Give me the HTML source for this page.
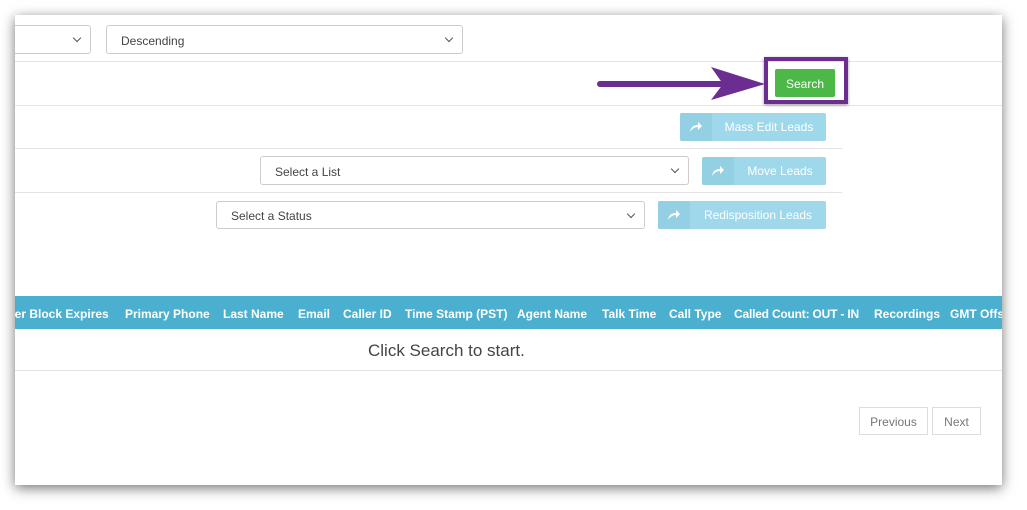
<!DOCTYPE html><html><head><style>
body{margin:0;width:1027px;height:510px;background:#fff;position:relative;overflow:hidden;font-family:"Liberation Sans",sans-serif;}
#pg{position:absolute;left:15px;top:15px;width:987px;height:470px;background:#fff;box-shadow:0 3px 12px rgba(0,0,0,.55);overflow:hidden}
.a{position:absolute}
.sel{position:absolute;border:1px solid #ccc;border-radius:3px;background:#fff;font-size:12px;color:#444;box-sizing:border-box;padding-left:14px;line-height:30px}
.sel:after{content:"";position:absolute;right:10px;top:9px;width:5px;height:5px;border-right:1.5px solid #555;border-bottom:1.5px solid #555;transform:rotate(45deg)}
.hl{position:absolute;height:1px;background:#e3e3e3;left:0}
.bb{position:absolute;background:#9fd8ea;border-radius:2px;color:#fff;font-size:12px;height:28px;line-height:29px}
.bb .ic{position:absolute;left:0;top:0;width:32px;height:28px;background:#93d0e3;border-radius:2px 0 0 2px}
.bb .ic svg{position:absolute;left:9px;top:8px}
.bb span{position:absolute;right:0;left:32px;text-align:center}
</style></head><body>
<div id="pg">
<div class="sel" style="left:-20px;top:10px;width:96px;height:29px"></div>
<div class="sel" style="left:91px;top:10px;width:357px;height:29px">Descending</div>
<div class="hl" style="top:46px;width:987px"></div>
<div class="hl" style="top:90px;width:987px"></div>
<div class="hl" style="top:133px;width:827px"></div>
<div class="hl" style="top:177px;width:827px"></div>
<svg class="a" style="left:580px;top:50px" width="175" height="36"><path d="M5 19 H130" stroke="#6b2d8f" stroke-width="6" stroke-linecap="round"/><path d="M116 2 L170 19 L116 35 L128 19 Z" fill="#6b2d8f"/></svg>
<div class="a" style="left:749px;top:42px;width:84px;height:47px;border:4px solid #6b2d8f;box-sizing:border-box;box-shadow:0 1px 3px rgba(0,0,0,.4)"></div>
<div class="a" style="left:760px;top:54px;width:60px;height:28px;background:#4cb848;border-radius:2px;color:#fff;font-size:12px;line-height:30px;text-align:center">Search</div>
<div class="bb" style="left:665px;top:98px;width:146px"><div class="ic"><svg width="14" height="12"><path d="M1 11 Q2 4 9 4 V1 L13 5 L9 9 V6 Q4 6 1 11Z" fill="#fff"/></svg></div><span>Mass Edit Leads</span></div>
<div class="sel" style="left:245px;top:141px;width:429px;height:29px">Select a List</div>
<div class="bb" style="left:687px;top:142px;width:124px"><div class="ic"><svg width="14" height="12"><path d="M1 11 Q2 4 9 4 V1 L13 5 L9 9 V6 Q4 6 1 11Z" fill="#fff"/></svg></div><span>Move Leads</span></div>
<div class="sel" style="left:201px;top:186px;width:429px;height:28px;line-height:29px">Select a Status</div>
<div class="bb" style="left:643px;top:186px;width:168px"><div class="ic"><svg width="14" height="12"><path d="M1 11 Q2 4 9 4 V1 L13 5 L9 9 V6 Q4 6 1 11Z" fill="#fff"/></svg></div><span>Redisposition Leads</span></div>
<div class="a" style="left:0;top:281px;width:987px;height:33px;background:#4bafd0;color:#fff;font-size:12px;font-weight:bold;line-height:36px;white-space:nowrap">
<span class="a" style="left:-7px">ker Block Expires</span><span class="a" style="left:110px">Primary Phone</span><span class="a" style="left:208px">Last Name</span><span class="a" style="left:283px">Email</span><span class="a" style="left:328px">Caller ID</span><span class="a" style="left:390px">Time Stamp (PST)</span><span class="a" style="left:502px">Agent Name</span><span class="a" style="left:587px">Talk Time</span><span class="a" style="left:654px">Call Type</span><span class="a" style="left:719px;letter-spacing:-0.2px">Called Count: OUT - IN</span><span class="a" style="left:859px">Recordings</span><span class="a" style="left:935px">GMT Offset</span></div>
<div class="a" style="left:353px;top:326px;font-size:17px;color:#444">Click Search to start.</div>
<div class="hl" style="top:355px;width:987px"></div>
<div class="a" style="left:844px;top:392px;width:69px;height:28px;border:1px solid #ddd;box-sizing:border-box;font-size:12px;color:#777;text-align:center;line-height:28px">Previous</div>
<div class="a" style="left:917px;top:392px;width:49px;height:28px;border:1px solid #ddd;box-sizing:border-box;font-size:12px;color:#777;text-align:center;line-height:28px">Next</div>
</div>
</body></html>
